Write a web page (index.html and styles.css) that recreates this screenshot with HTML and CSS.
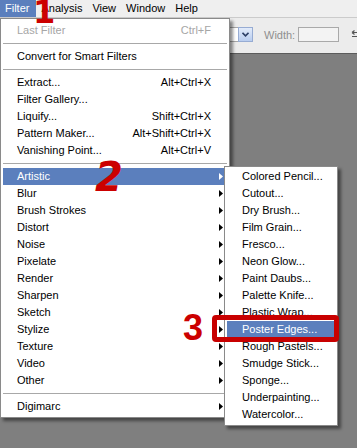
FILE: index.html
```html
<!DOCTYPE html>
<html lang="en">

<head>
    <meta charset="UTF-8">
    <meta name="viewport" content="width=device-width, initial-scale=1.0">
    <title>Filter Menu</title>
    <link rel="stylesheet" href="styles.css">
</head>

<body>

    <div class="screen">
        <div class="menubar">
            <span class="menubar-item is-open">Filter</span>
            <span class="menubar-item">Analysis</span>
            <span class="menubar-item">View</span>
            <span class="menubar-item">Window</span>
            <span class="menubar-item">Help</span>
        </div>

        <div class="options-bar">
            <div class="field-select">
                <span class="field-value"></span>
                <span class="drop-btn">
                    <svg width="7" height="5" viewBox="0 0 7 5"><polyline points="0.5,0.8 3.5,3.8 6.5,0.8" fill="none" stroke="#2d3f66" stroke-width="1.6"/></svg>
                </span>
            </div>
            <span class="opt-label">Width:</span>
            <span class="field-input"></span>
            <span class="swap-icon">
                <svg width="12" height="9" viewBox="0 0 12 9"><path d="M1 2.5h10M1 2.5l2.5-2M1 2.5l2.5 2M11 6.5H1M11 6.5l-2.5-2M11 6.5l-2.5 2" fill="none" stroke="#555" stroke-width="1.2"/></svg>
            </span>
        </div>

        <div class="workspace"></div>

        <!-- open Filter menu -->
        <div class="menu filter-menu">
            <div class="menu-item is-disabled"><span>Last Filter</span><span class="shortcut">Ctrl+F</span></div>
            <div class="menu-sep"></div>
            <div class="menu-item"><span>Convert for Smart Filters</span></div>
            <div class="menu-sep"></div>
            <div class="menu-item"><span>Extract...</span><span class="shortcut">Alt+Ctrl+X</span></div>
            <div class="menu-item"><span>Filter Gallery...</span></div>
            <div class="menu-item"><span>Liquify...</span><span class="shortcut">Shift+Ctrl+X</span></div>
            <div class="menu-item"><span>Pattern Maker...</span><span class="shortcut">Alt+Shift+Ctrl+X</span></div>
            <div class="menu-item"><span>Vanishing Point...</span><span class="shortcut">Alt+Ctrl+V</span></div>
            <div class="menu-sep"></div>
            <div class="menu-item is-active">
                <span>Artistic</span>
                <svg class="sub-arrow" width="4" height="7" viewBox="0 0 4 7"><polygon points="0,0 4,3.5 0,7"/></svg>

                <div class="menu submenu">
                    <div class="menu-item">Colored Pencil...</div>
                    <div class="menu-item">Cutout...</div>
                    <div class="menu-item">Dry Brush...</div>
                    <div class="menu-item">Film Grain...</div>
                    <div class="menu-item">Fresco...</div>
                    <div class="menu-item">Neon Glow...</div>
                    <div class="menu-item">Paint Daubs...</div>
                    <div class="menu-item">Palette Knife...</div>
                    <div class="menu-item">Plastic Wrap...</div>
                    <div class="menu-item is-active">Poster Edges...</div>
                    <div class="menu-item">Rough Pastels...</div>
                    <div class="menu-item">Smudge Stick...</div>
                    <div class="menu-item">Sponge...</div>
                    <div class="menu-item">Underpainting...</div>
                    <div class="menu-item">Watercolor...</div>
                </div>
            </div>
            <div class="menu-item"><span>Blur</span><svg class="sub-arrow" width="4" height="7" viewBox="0 0 4 7"><polygon points="0,0 4,3.5 0,7"/></svg></div>
            <div class="menu-item"><span>Brush Strokes</span><svg class="sub-arrow" width="4" height="7" viewBox="0 0 4 7"><polygon points="0,0 4,3.5 0,7"/></svg></div>
            <div class="menu-item"><span>Distort</span><svg class="sub-arrow" width="4" height="7" viewBox="0 0 4 7"><polygon points="0,0 4,3.5 0,7"/></svg></div>
            <div class="menu-item"><span>Noise</span><svg class="sub-arrow" width="4" height="7" viewBox="0 0 4 7"><polygon points="0,0 4,3.5 0,7"/></svg></div>
            <div class="menu-item"><span>Pixelate</span><svg class="sub-arrow" width="4" height="7" viewBox="0 0 4 7"><polygon points="0,0 4,3.5 0,7"/></svg></div>
            <div class="menu-item"><span>Render</span><svg class="sub-arrow" width="4" height="7" viewBox="0 0 4 7"><polygon points="0,0 4,3.5 0,7"/></svg></div>
            <div class="menu-item"><span>Sharpen</span><svg class="sub-arrow" width="4" height="7" viewBox="0 0 4 7"><polygon points="0,0 4,3.5 0,7"/></svg></div>
            <div class="menu-item"><span>Sketch</span><svg class="sub-arrow" width="4" height="7" viewBox="0 0 4 7"><polygon points="0,0 4,3.5 0,7"/></svg></div>
            <div class="menu-item"><span>Stylize</span><svg class="sub-arrow" width="4" height="7" viewBox="0 0 4 7"><polygon points="0,0 4,3.5 0,7"/></svg></div>
            <div class="menu-item"><span>Texture</span><svg class="sub-arrow" width="4" height="7" viewBox="0 0 4 7"><polygon points="0,0 4,3.5 0,7"/></svg></div>
            <div class="menu-item"><span>Video</span><svg class="sub-arrow" width="4" height="7" viewBox="0 0 4 7"><polygon points="0,0 4,3.5 0,7"/></svg></div>
            <div class="menu-item"><span>Other</span><svg class="sub-arrow" width="4" height="7" viewBox="0 0 4 7"><polygon points="0,0 4,3.5 0,7"/></svg></div>
            <div class="menu-sep"></div>
            <div class="menu-item"><span>Digimarc</span><svg class="sub-arrow" width="4" height="7" viewBox="0 0 4 7"><polygon points="0,0 4,3.5 0,7"/></svg></div>
        </div>

        <!-- tutorial marks -->
        <span class="mark mark-1">1</span>
        <span class="mark mark-2">2</span>
        <span class="mark mark-3">3</span>
        <div class="callout-box"></div>
    </div>

</body>

</html>
```

FILE: styles.css
```css
body {
    margin: 0;
    background-color: #7f7f7f;
}

.screen {
    position: relative;
    width: 357px;
    height: 448px;
    overflow: hidden;
    display: flex;
    flex-direction: column;
    font-family: 'Liberation Sans', Arial, sans-serif;
    font-size: 11px;
    color: #000;
}

/* menu bar */
.menubar {
    display: flex;
    height: 17px;
    line-height: 17px;
    background-color: #efefef;
}

.menubar-item {
    padding: 0 5px;
}

.menubar-item.is-open {
    background-color: #5b7fbd;
    color: #fff;
    padding-right: 7px;
}

/* options bar */
.options-bar {
    display: flex;
    align-items: center;
    height: 36px;
    padding: 0 0 2px 178px;
    box-sizing: border-box;
    border-top: 1px solid #cbcbcb;
    background-color: #ececec;
    flex-shrink: 0;
}

.options-bar > * {
    flex-shrink: 0;
}

.field-select {
    display: flex;
    height: 15px;
}

.field-value {
    width: 60px;
    box-sizing: border-box;
    border: 1px solid #a7a7a7;
    border-right: none;
    background-color: #fff;
}

.drop-btn {
    display: flex;
    align-items: center;
    justify-content: center;
    width: 15px;
    height: 15px;
    box-sizing: border-box;
    border: 1px solid #97acd3;
    background: linear-gradient(#e2ebfa, #b9cdef);
}

.opt-label {
    margin-left: 11px;
    color: #8f8f8f;
}

.field-input {
    width: 41px;
    height: 15px;
    margin-left: 3px;
    box-sizing: border-box;
    border: 1px solid #a9a9a9;
    background-color: #f3f3f3;
}

.swap-icon {
    display: flex;
    margin-left: 12px;
}

.workspace {
    flex: 1;
    background-color: #7f7f7f;
    border-top: 1px solid #5c5c5c;
}

/* drop-down menus */
.menu {
    position: absolute;
    background-color: #fff;
    border: 1px solid #8a8a8a;
    box-sizing: border-box;
    box-shadow: 3px 3px 3px rgba(0, 0, 0, 0.45);
}

.filter-menu {
    left: 0;
    top: 18px;
    width: 230px;
    padding: 3px 2px 2px;
}

.menu-item {
    position: relative;
    display: flex;
    height: 17px;
    line-height: 17px;
    padding: 0 16px 0 14px;
    white-space: nowrap;
}

.menu-item .shortcut {
    margin-left: auto;
}

.menu-item.is-disabled {
    color: #a6a6a6;
}

.menu-item.is-active {
    background-color: #5b7fbd;
    color: #fff;
}

.menu-sep {
    height: 1px;
    margin: 4px 0;
    background-color: #a8a8a8;
}

.sub-arrow {
    position: absolute;
    right: 4px;
    top: 5px;
    fill: currentColor;
}

.submenu {
    left: 221px;
    top: -2px;
    width: 114px;
    padding: 1px 2px 2px;
    color: #000;
}

.submenu .menu-item {
    padding: 0 4px 0 15px;
}

.submenu .menu-item.is-active {
    color: #fff;
}

/* red tutorial marks */
.mark {
    position: absolute;
    color: #cc0000;
    font-family: 'DejaVu Sans', sans-serif;
    font-weight: bold;
    line-height: 0.8;
}

.mark-1 {
    left: 33px;
    top: 0;
    font-size: 32px;
}

.mark-2 {
    left: 95px;
    top: 161px;
    font-size: 40px;
    font-style: italic;
}

.mark-3 {
    left: 183px;
    top: 314px;
    font-size: 36px;
    font-family: 'Liberation Sans', sans-serif;
}

.callout-box {
    position: absolute;
    left: 212px;
    top: 315px;
    width: 127px;
    height: 27px;
    box-sizing: border-box;
    border: 5px solid #c80000;
    border-radius: 4px;
}
```
